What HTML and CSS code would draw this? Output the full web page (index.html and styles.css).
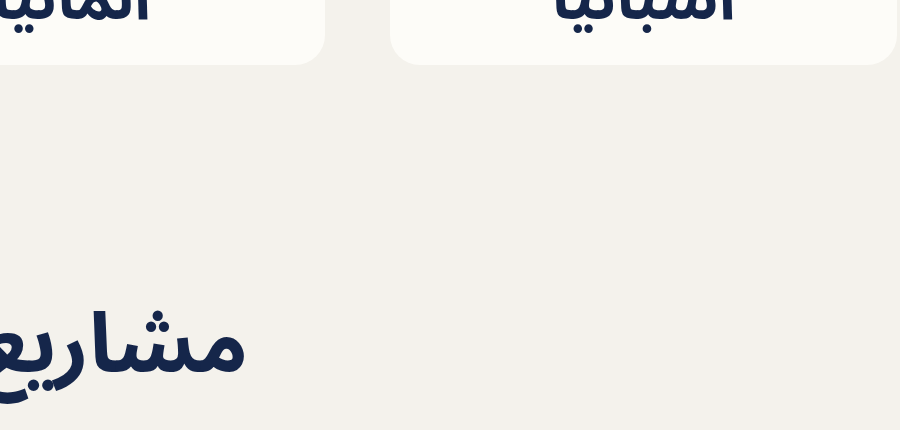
FILE: index.html
```html
<!DOCTYPE html>
<html lang="ar" dir="rtl">
<head>
<meta charset="utf-8">
<link rel="stylesheet" href="styles.css">
</head>
<body>
<main class="page">
  <div class="cards">
    <div class="card"><span class="card-name">اسبانيا</span></div>
    <div class="card"><span class="card-name">المانيا</span></div>
  </div>
  <section class="projects">
    <h2 class="projects-title">مشاريع</h2>
  </section>
</main>
</body>
</html>
```

FILE: styles.css
```css
html, body {
  margin: 0;
  padding: 0;
}
body {
  width: 900px;
  height: 430px;
  overflow: hidden;
  background: #f4f2ec;
  font-family: "Noto Sans Arabic", "Noto Kufi Arabic", "Noto Naskh Arabic", "DejaVu Sans", sans-serif;
  color: #15264a;
}
.page {
  direction: rtl;
}
.cards {
  display: flex;
  gap: 65px;
  margin-top: -90px;
  padding-right: 3px;
}
.card {
  flex: 0 0 507px;
  height: 155px;
  background: #fdfcf8;
  border-radius: 30px;
  display: flex;
  align-items: flex-end;
  justify-content: center;
  padding-bottom: 34px;
  box-sizing: border-box;
}
.card-name {
  font-size: 62px;
  font-weight: bold;
  line-height: 1;
}
.projects {
  padding-right: 652px;
  margin-top: 239px;
}
.projects-title {
  margin: 0;
  font-size: 83px;
  font-weight: bold;
  line-height: 1;
  white-space: nowrap;
}
```
